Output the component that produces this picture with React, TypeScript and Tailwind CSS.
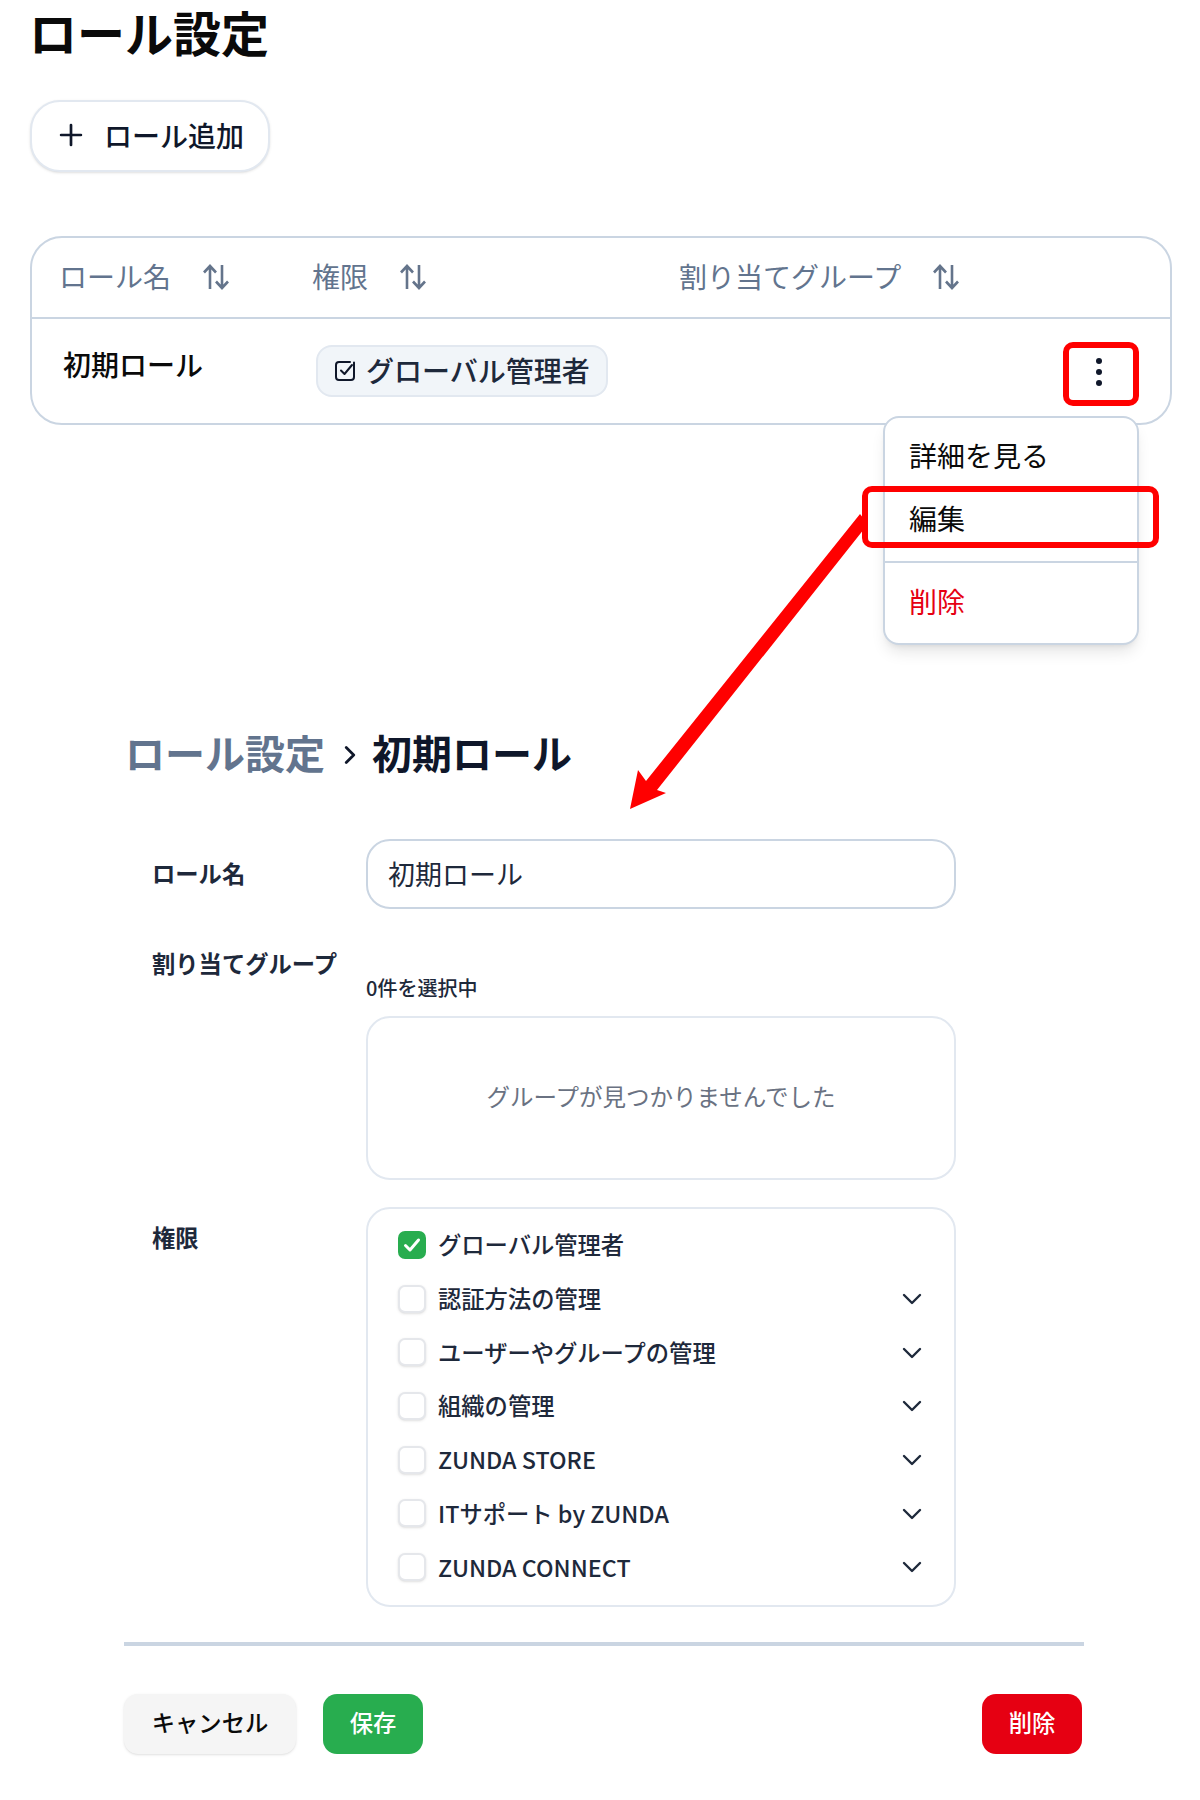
import { ChevronDown, ChevronRight, Plus } from "lucide-react"

const permissions = [
  { name: "グローバル管理者", checked: true, expandable: false },
  { name: "認証方法の管理", checked: false, expandable: true },
  { name: "ユーザーやグループの管理", checked: false, expandable: true },
  { name: "組織の管理", checked: false, expandable: true },
  { name: "ZUNDA STORE", checked: false, expandable: true },
  { name: "ITサポート by ZUNDA", checked: false, expandable: true },
  { name: "ZUNDA CONNECT", checked: false, expandable: true },
]

const SortIcon = () => (
  <svg width="28" height="28" viewBox="0 0 28 28" fill="none" stroke="#64748b" strokeWidth="2.6" className="mt-[2px] shrink-0">
    <path d="M8 26V3M2 9.5l6-6.5 6 6.500" />
    <path d="M20 2v23M14 18.500l6 6.500 6-6.500" />
  </svg>
)

const HeaderCell = ({ label }: { label: string }) => (
  <div className="flex items-center gap-[31px] pb-[4px] text-[28px] leading-none text-slate-500">
    <span>{label}</span>
    <SortIcon />
  </div>
)

const App = () => {
  return (
    <div className="relative h-[1800px] w-[1200px] overflow-hidden bg-white font-['Noto_Sans_CJK_JP','Noto_Sans',sans-serif] text-[#0f172a]">
      {/* role list */}
      <div className="pl-[30px]">
        <h1 className="-ml-[1px] pt-[1px] text-[48px] font-bold leading-[60px] text-[#0a0a0a]">ロール設定</h1>

        <button className="mt-[39px] flex h-[72px] w-[240px] items-center gap-[16px] rounded-[30px] border-2 border-slate-200 bg-white pb-[3px] pl-[22px] text-[28px] font-medium shadow-sm">
          <Plus size={34} strokeWidth={1.9} />
          <span>ロール追加</span>
        </button>

        <div className="mt-[64px] h-[189px] w-[1142px] rounded-[32px] border-2 border-slate-300">
          <div className="grid h-[81px] grid-cols-[253px_367px_1fr] items-center border-b-2 border-slate-300 pl-[27px]">
            <HeaderCell label="ロール名" />
            <HeaderCell label="権限" />
            <HeaderCell label="割り当てグループ" />
          </div>
          <div className="grid grid-cols-[253px_1fr] pl-[31px] pt-[26px]">
            <div className="pt-[1px] text-[28px] font-medium leading-[36px] text-[#0a0a0a]">初期ロール</div>
            <div className="flex h-[52px] w-[292px] items-center gap-[9px] rounded-[16px] border-2 border-slate-200 bg-slate-100 pb-[3px] pl-[15px] text-[28px] font-medium text-[#1e293b]">
              <svg width="24" height="24" viewBox="0 0 24 24" fill="none" stroke="#0f172a" strokeWidth="2" strokeLinecap="round" strokeLinejoin="round" className="mt-[3px] shrink-0">
                <path d="M21 3.5V18a3 3 0 0 1-3 3H6a3 3 0 0 1-3-3V6a3 3 0 0 1 3-3h11" />
                <path d="M8 11.5l3.5 3.5L19 6" />
              </svg>
              <span>グローバル管理者</span>
            </div>
          </div>
        </div>
      </div>

      {/* row menu */}
      <div className="absolute left-[883px] top-[416px] flex h-[229px] w-[256px] flex-col rounded-[16px] border-2 border-slate-300 bg-white text-[28px] text-[#0a0a0a] shadow-lg">
        <div className="flex h-[72px] items-center pl-[24px] pt-[2px]">詳細を見る</div>
        <div className="flex h-[66px] items-center pb-[9px] pl-[24px]">編集</div>
        <div className="mt-[6px] border-t-2 border-slate-300" />
        <div className="flex h-[80px] items-center pb-[4px] pl-[24px] text-[#e60012]">削除</div>
      </div>

      {/* role edit form */}
      <div className="ml-[124px] mt-[303px] w-[960px]">
        <div className="flex h-[50px] items-center pb-[2px] pl-[1px] text-[40px] font-bold leading-none">
          <span className="text-slate-500">ロール設定</span>
          <ChevronRight size={30} strokeWidth={2.2} className="ml-[10px] mt-[6px]" />
          <span className="ml-[7px]">初期ロール</span>
        </div>

        <div className="mt-[61px] grid grid-cols-[214px_590px] pl-[28px]">
          <div className="flex h-[70px] items-center pb-[2px] text-[23.3px] font-bold text-[#1e293b]">ロール名</div>
          <div className="flex h-[70px] items-center rounded-[24px] border-2 border-slate-300 pl-[20px] text-[27px] text-[#1e293b]">初期ロール</div>

          <div className="pt-[34px] text-[23.3px] font-bold leading-[40px] text-[#1e293b]">割り当てグループ</div>
          <div className="pt-[65px]">
            <div className="text-[20px] font-medium leading-[28px] text-[#1e293b]">0件を選択中</div>
            <div className="mt-[14px] flex h-[164px] items-center justify-center rounded-[24px] border-2 border-slate-200 pb-[2px] text-[23.5px] text-gray-500">
              グループが見つかりませんでした
            </div>
          </div>

          <div className="pt-[39px] text-[23.3px] font-bold leading-[36px] text-[#1e293b]">権限</div>
          <div className="mt-[27px] rounded-[24px] border-2 border-slate-200 pb-[11px] pl-[30px] pr-[30px] pt-[9px]">
            {permissions.map((item) => (
              <div key={item.name} className="flex h-[53.7px] items-center gap-[12px] text-[23.3px] font-medium text-[#1e293b]">
                {item.checked ? (
                  <div className="flex h-[28px] w-[28px] items-center justify-center rounded-[7px] bg-[#28ad4f]">
                    <svg width="20" height="20" viewBox="0 0 20 20" fill="none" stroke="white" strokeWidth="3" strokeLinecap="round" strokeLinejoin="round">
                      <path d="M3.5 10.5l4.5 4.5 8.5-10" />
                    </svg>
                  </div>
                ) : (
                  <div className="h-[28px] w-[28px] rounded-[7px] border-2 border-gray-200 bg-white shadow-sm" />
                )}
                <span className="flex-1">{item.name}</span>
                {item.expandable && <ChevronDown size={32} strokeWidth={1.8} className="-mr-[4px] mt-[1px]" />}
              </div>
            ))}
          </div>
        </div>

        <div className="mt-[35px] h-[4px] bg-slate-300" />

        <div className="mt-[48px] flex items-start gap-[27px] pr-[2px] text-[23.3px] font-medium">
          <button className="h-[60px] w-[172px] rounded-[14px] bg-[#f5f5f5] pb-[2px] text-[#0a0a0a] shadow-sm">キャンセル</button>
          <button className="h-[60px] w-[100px] rounded-[14px] bg-[#28ad4f] pb-[2px] text-white">保存</button>
          <button className="ml-auto h-[60px] w-[100px] rounded-[14px] bg-[#e60012] pb-[2px] text-white">削除</button>
        </div>
      </div>

      {/* red annotations */}
      <div className="absolute left-[1099px] top-[358px] flex -translate-x-1/2 flex-col gap-[5px]">
        <div className="h-[6px] w-[6px] rounded-full bg-[#0f172a]" />
        <div className="h-[6px] w-[6px] rounded-full bg-[#0f172a]" />
        <div className="h-[6px] w-[6px] rounded-full bg-[#0f172a]" />
      </div>
      <div className="absolute left-[1063px] top-[342px] h-[64px] w-[76px] rounded-[10px] border-[6px] border-[#ff0000]" />
      <div className="absolute left-[862px] top-[486px] h-[62px] w-[297px] rounded-[10px] border-[6px] border-[#ff0000]" />
      <svg width="1200" height="1800" viewBox="0 0 1200 1800" className="pointer-events-none absolute left-0 top-0">
        <polygon fill="#ff0000" points="860,514 868,524 657,790 666,793 630,809 638,770 646,781" />
      </svg>
    </div>
  )
}

export default App
